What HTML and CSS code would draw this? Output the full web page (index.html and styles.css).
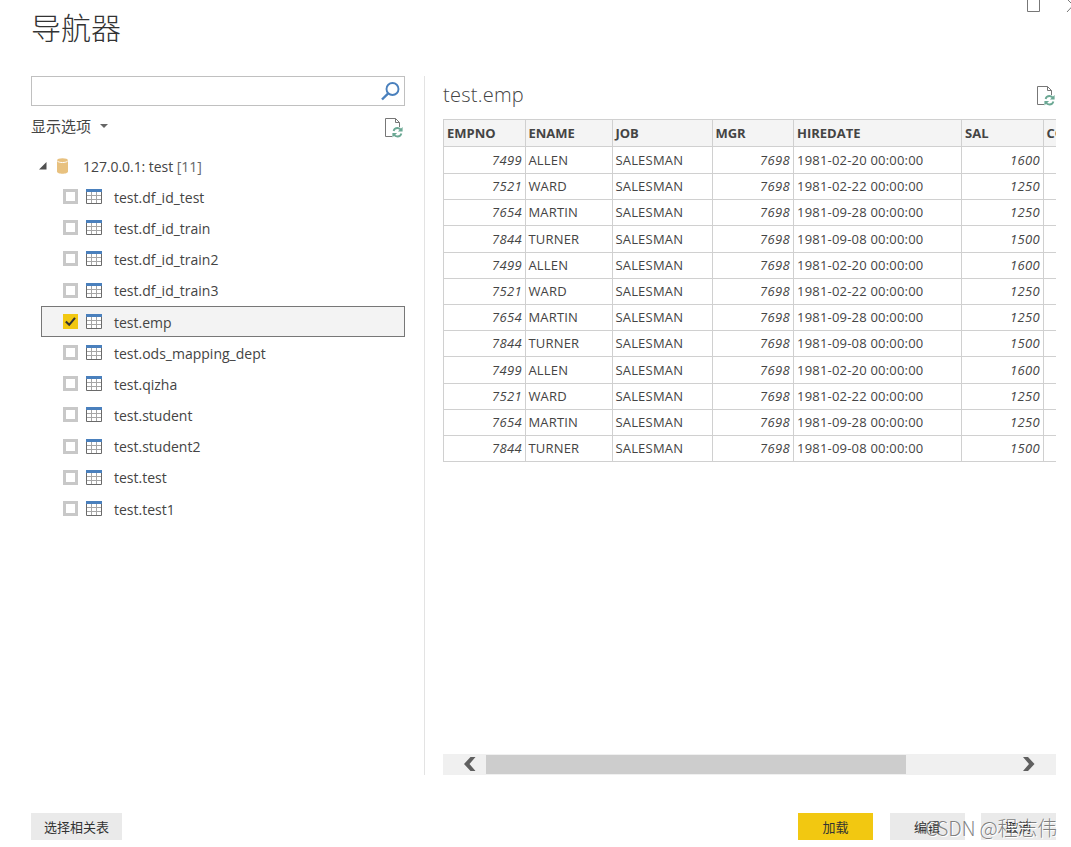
FILE: index.html
```html
<!DOCTYPE html>
<html lang="zh-CN">

<head>
    <meta charset="UTF-8" />
    <meta name="viewport" content="width=device-width, initial-scale=1.0" />
    <title>导航器</title>
    <link rel="stylesheet" href="styles.css">
</head>

<body>
    <!-- shared icons -->
    <svg class="defs" width="0" height="0">
        <symbol id="icon-table" viewBox="0 0 16 15">
            <path d="M0 0h16v15H0z" fill="#fff" />
            <path d="M1 6.5h14M1 10.5h14M5.5 3v11M10.5 3v11" stroke="#a6a6a6" fill="none" />
            <path d="M.5 2v12.5h15V2" stroke="#6a6a6a" fill="none" />
            <path d="M0 0h16v3H0z" fill="#4a80bd" />
        </symbol>
        <symbol id="icon-refresh" viewBox="0 0 18 20">
            <path d="M7 18.5H.5V.5h10l4 4V9M10.5 .5v4h4" stroke="#777" fill="none" />
            <path d="M8.6 13c.5-2 2.1-3 3.9-3 1.6 0 2.9.8 3.6 2.1M16.4 15.500c-.5 2-2.1 3-3.9 3-1.6 0-2.9-.8-3.6-2.1" stroke="#6ba894" stroke-width="1.8" fill="none" />
            <path d="M17.6 9v4.6h-4.7zM7.4 19.500v-4.6h4.7z" fill="#6ba894" />
        </symbol>
    </svg>

    <div class="window-buttons">
        <svg width="45" height="13" viewBox="0 0 45 13">
            <path d="M1.500 -2v13.500h12V-2M54 -2L41 12M41 -1l13 13" stroke="#777" fill="none" />
        </svg>
    </div>

    <h1>导航器</h1>

    <div class="main">
        <div class="left">
            <div class="search">
                <input type="text" />
                <svg width="19" height="19" viewBox="0 0 19 19">
                    <circle cx="11.500" cy="7" r="6" stroke="#4a80bd" stroke-width="1.9" fill="none" />
                    <path d="M7.2 11.3L1 17.500" stroke="#4a80bd" stroke-width="2.4" fill="none" />
                </svg>
            </div>
            <div class="options">
                <span>显示选项</span>
                <i class="caret"></i>
                <svg class="refresh" width="18" height="20"><use href="#icon-refresh" /></svg>
            </div>
            <div class="root">
                <svg width="8" height="8" viewBox="0 0 8 8"><path d="M7.500 0v7.500H0z" fill="#505050" /></svg>
                <svg class="db" width="11" height="16" viewBox="0 0 11 16">
                    <path d="M0 2.500v11c0 3 11 3 11 0v-11z" fill="#e8c17f" />
                    <ellipse cx="5.500" cy="2.400" rx="5.500" ry="2.200" fill="#e8c17f" />
                    <path d="M.3 3c1.500 2 8.900 2 10.400 0" stroke="#fff" fill="none" />
                </svg>
                <span>127.0.0.1: test <em>[11]</em></span>
            </div>
            <ul class="tree">
                <li><i class="box"></i><svg><use href="#icon-table" /></svg><span>test.df_id_test</span></li>
                <li><i class="box"></i><svg><use href="#icon-table" /></svg><span>test.df_id_train</span></li>
                <li><i class="box"></i><svg><use href="#icon-table" /></svg><span>test.df_id_train2</span></li>
                <li><i class="box"></i><svg><use href="#icon-table" /></svg><span>test.df_id_train3</span></li>
                <li class="selected">
                    <svg class="check" viewBox="0 0 15 15">
                        <path d="M0 0h15v15H0z" fill="#f2c811" />
                        <path d="M2.800 7.500l3.400 3.300L12 3.800" stroke="#333" stroke-width="2.100" fill="none" />
                    </svg><svg><use href="#icon-table" /></svg><span>test.emp</span>
                </li>
                <li><i class="box"></i><svg><use href="#icon-table" /></svg><span>test.ods_mapping_dept</span></li>
                <li><i class="box"></i><svg><use href="#icon-table" /></svg><span>test.qizha</span></li>
                <li><i class="box"></i><svg><use href="#icon-table" /></svg><span>test.student</span></li>
                <li><i class="box"></i><svg><use href="#icon-table" /></svg><span>test.student2</span></li>
                <li><i class="box"></i><svg><use href="#icon-table" /></svg><span>test.test</span></li>
                <li><i class="box"></i><svg><use href="#icon-table" /></svg><span>test.test1</span></li>
            </ul>
        </div>

        <div class="right">
            <div class="preview-title">
                <h2>test.emp</h2>
                <svg class="refresh" width="18" height="20"><use href="#icon-refresh" /></svg>
            </div>
            <div class="preview">
                <div class="row head"><b>EMPNO</b><b>ENAME</b><b>JOB</b><b>MGR</b><b>HIREDATE</b><b>SAL</b><b>COMM</b></div>
                <div class="row"><i>7499</i><span>ALLEN</span><span>SALESMAN</span><i>7698</i><span>1981-02-20 00:00:00</span><i>1600</i><i></i></div>
                <div class="row"><i>7521</i><span>WARD</span><span>SALESMAN</span><i>7698</i><span>1981-02-22 00:00:00</span><i>1250</i><i></i></div>
                <div class="row"><i>7654</i><span>MARTIN</span><span>SALESMAN</span><i>7698</i><span>1981-09-28 00:00:00</span><i>1250</i><i></i></div>
                <div class="row"><i>7844</i><span>TURNER</span><span>SALESMAN</span><i>7698</i><span>1981-09-08 00:00:00</span><i>1500</i><i></i></div>
                <div class="row"><i>7499</i><span>ALLEN</span><span>SALESMAN</span><i>7698</i><span>1981-02-20 00:00:00</span><i>1600</i><i></i></div>
                <div class="row"><i>7521</i><span>WARD</span><span>SALESMAN</span><i>7698</i><span>1981-02-22 00:00:00</span><i>1250</i><i></i></div>
                <div class="row"><i>7654</i><span>MARTIN</span><span>SALESMAN</span><i>7698</i><span>1981-09-28 00:00:00</span><i>1250</i><i></i></div>
                <div class="row"><i>7844</i><span>TURNER</span><span>SALESMAN</span><i>7698</i><span>1981-09-08 00:00:00</span><i>1500</i><i></i></div>
                <div class="row"><i>7499</i><span>ALLEN</span><span>SALESMAN</span><i>7698</i><span>1981-02-20 00:00:00</span><i>1600</i><i></i></div>
                <div class="row"><i>7521</i><span>WARD</span><span>SALESMAN</span><i>7698</i><span>1981-02-22 00:00:00</span><i>1250</i><i></i></div>
                <div class="row"><i>7654</i><span>MARTIN</span><span>SALESMAN</span><i>7698</i><span>1981-09-28 00:00:00</span><i>1250</i><i></i></div>
                <div class="row"><i>7844</i><span>TURNER</span><span>SALESMAN</span><i>7698</i><span>1981-09-08 00:00:00</span><i>1500</i><i></i></div>
            </div>
            <div class="scrollbar">
                <svg width="12" height="14" viewBox="0 0 12 14"><path d="M6.500 0H11.500L5.500 7l6 7H6.500L0 7z" fill="#606060" /></svg>
                <div class="thumb"></div>
                <svg width="12" height="14" viewBox="0 0 12 14"><path d="M5 0H0l6 7-6 7h5l6.500-7z" fill="#606060" /></svg>
            </div>
        </div>
    </div>

    <div class="footer">
        <button class="related">选择相关表</button>
        <button class="primary">加载</button>
        <button>编辑</button>
        <button>取消</button>
        <div class="watermark">CSDN @程志伟</div>
    </div>
</body>

</html>
```
FILE: styles.css
```css
* {
    margin: 0;
    padding: 0;
    box-sizing: border-box;
}

body {
    position: relative;
    display: flex;
    flex-direction: column;
    width: 1071px;
    height: 847px;
    overflow: hidden;
    background-color: #fff;
    color: #444;
    font-family: "Open Sans", "Noto Sans CJK SC", sans-serif;
    font-size: 14px;
}

svg {
    display: block;
    flex-shrink: 0;
}

.defs {
    position: absolute;
}

.window-buttons {
    position: absolute;
    top: 0;
    right: 0;
}

h1 {
    height: 76px;
    padding: 4px 0 0 31px;
    color: #333;
    font-family: "Noto Sans CJK SC Light", "Noto Sans CJK SC", sans-serif;
    font-size: 30px;
    font-weight: 300;
    line-height: 44px;
}

.main {
    display: flex;
    height: 699px;
    padding: 0 15px 0 31px;
}

.left {
    width: 394px;
    padding-right: 19px;
    border-right: 1px solid #e3e3e3;
}

.search {
    display: flex;
    height: 30px;
    padding: 5px 4px 5px 3px;
    border: 1px solid #c0c0c0;
}

.search input {
    flex-grow: 1;
    min-width: 0;
    border: none;
    outline: none;
}

.options {
    display: flex;
    align-items: center;
    height: 43px;
    font-size: 15px;
}

.options span {
    margin-top: -4px;
}

.caret {
    margin: -3px 0 0 9px;
    border: 4px solid transparent;
    border-top-color: #666;
    border-bottom: none;
}

.refresh {
    margin-left: auto;
}

.options .refresh {
    margin-right: 2px;
    margin-top: 1px;
}

.root {
    display: flex;
    align-items: center;
    height: 33px;
    padding-left: 8px;
    letter-spacing: -0.05px;
}

.root .db {
    margin: 0 15px 0 10px;
}

.root span {
    margin-top: 1px;
}

.root em {
    color: #666;
    font-style: normal;
}

.tree {
    margin-top: -1px;
    list-style: none;
}

.tree li {
    display: flex;
    align-items: center;
    height: 31.2px;
    margin-left: 10px;
    padding-left: 22px;
}

.tree span {
    margin-top: 1.4px;
}

.tree svg {
    width: 16px;
    height: 15px;
    margin-right: 12px;
}

.tree .box,
.tree .check {
    width: 15px;
    height: 15px;
    margin-right: 8px;
}

.tree .box {
    border: 3px solid #c8c8c8;
}

.tree .selected {
    padding-left: 21px;
    border: 1px solid #777;
    background-color: #f3f3f3;
}

.right {
    display: flex;
    flex-direction: column;
    width: 631px;
    padding-left: 18px;
}

.preview-title {
    display: flex;
    align-items: center;
    height: 43px;
    padding: 0 1px 4px 0;
}

h2 {
    margin-top: -2px;
    font-size: 20px;
    font-weight: 300;
    letter-spacing: 0.25px;
}

.preview {
    overflow: hidden;
    padding-bottom: 1px;
    border-top: 1px solid #d0d0d0;
    border-left: 1px solid #d0d0d0;
    font-size: 13px;
}

.row {
    display: grid;
    grid-template-columns: 82px 87px 100px 81px 168px 82px 82px;
    height: 26.2px;
    line-height: 26px;
}

.row > * {
    padding: 0 3px 0 2.4px;
    border-right: 1px solid #d0d0d0;
    border-bottom: 1px solid #d0d0d0;
    letter-spacing: 0.2px;
    white-space: nowrap;
}

.row > :first-child,
.row > :nth-child(5),
.row > :nth-child(6) {
    padding-left: 3px;
}

.row i {
    letter-spacing: 0.35px;
    text-align: right;
}

.row b {
    letter-spacing: 0;
}

.head {
    width: 682px;
    height: 27px;
    background-color: #f4f4f4;
}

.scrollbar {
    display: flex;
    align-items: center;
    height: 21px;
    margin-top: auto;
    padding: 0 21px;
    background-color: #f0f0f0;
}

.scrollbar svg {
    margin-top: -1px;
}

.thumb {
    width: 420px;
    height: 19px;
    margin: 0 auto 0 10px;
    background-color: #cdcdcd;
}

.footer {
    position: relative;
    display: flex;
    gap: 16.5px;
    padding: 38px 15px 0 31px;
}

button {
    width: 75px;
    height: 27px;
    padding-bottom: 1px;
    border: none;
    background-color: #eaeaea;
    color: #333;
    font-family: "Noto Sans CJK SC", sans-serif;
    font-size: 13px;
}

.related {
    width: 91px;
    margin-right: auto;
}

.primary {
    background-color: #f2c811;
}

.watermark {
    position: absolute;
    top: 40px;
    right: 14px;
    color: rgba(80, 80, 80, 0.7);
    font-family: "Noto Sans CJK SC Light", "Noto Sans CJK SC", sans-serif;
    font-size: 20px;
    font-weight: 300;
    line-height: 26px;
    letter-spacing: -0.2px;
    text-shadow: 1px 1px 0 #fff;
}
```
